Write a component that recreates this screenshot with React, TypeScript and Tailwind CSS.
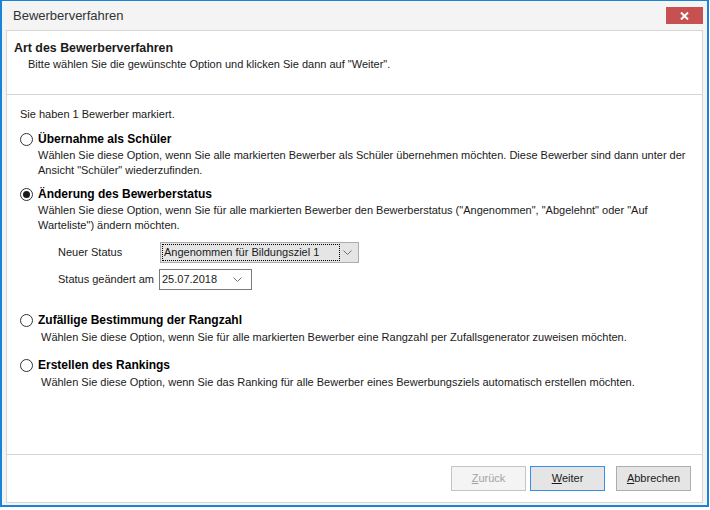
import type { ReactNode } from 'react'

const Radio = ({ checked }: { checked?: boolean }) => (
  <span className="w-[13px] h-[13px] shrink-0 rounded-full border border-[#333333] bg-white flex items-center justify-center">
    {checked && <span className="w-[7px] h-[7px] rounded-full bg-[#1a1a1a]" />}
  </span>
)

const Chevron = () => (
  <svg width="9" height="5" viewBox="0 0 9 5" className="shrink-0">
    <path d="M0.5 0.5 L4.5 4.5 L8.5 0.5" fill="none" stroke="#707070" strokeWidth="1" />
  </svg>
)

type OptionProps = {
  label: string
  checked?: boolean
  className?: string
  descClass?: string
  children: ReactNode
}

const Option = ({ label, checked, className, descClass, children }: OptionProps) => (
  <div className={className}>
    <div className="flex items-center h-[16px]">
      <Radio checked={checked} />
      <span className="ml-[5px] text-[12px] font-bold text-black">{label}</span>
    </div>
    <p className={`text-[11px] leading-[15px] text-[#1a1a1a] ${descClass ?? 'pl-[18px] mt-px'}`}>
      {children}
    </p>
  </div>
)

export default function App() {
  return (
    <div className="w-[710px] h-[510px] bg-white font-['Liberation_Sans',Arial,sans-serif]">
      <div className="w-[709px] h-[507px] border-2 border-t border-[#1883d7] bg-[#f4f4f4] flex flex-col px-1 pb-[2px]">
        {/* title bar */}
        <div className="h-[29px] shrink-0 flex items-center justify-between">
          <span className="pl-[7px] text-[13px] text-[#333333]">Bewerberverfahren</span>
          <button className="w-[37px] h-[17px] bg-[#c75050] flex items-center justify-center">
            <svg width="9" height="8" viewBox="0 0 9 8">
              <path d="M1 0.5 L8 7.5 M8 0.5 L1 7.5" stroke="white" strokeWidth="2" />
            </svg>
          </button>
        </div>

        {/* panel */}
        <div className="flex-1 border border-[#d5d5d5] bg-white flex flex-col">
          <div className="h-[64px] shrink-0 border-b border-[#d5d5d5] pt-[9px] pl-[7px]">
            <h1 className="text-[12.4px] leading-[16px] font-bold text-[#1a1a1a]">Art des Bewerberverfahren</h1>
            <p className="ml-[14px] text-[11px] leading-[16px] text-[#1a1a1a]">
              Bitte wählen Sie die gewünschte Option und klicken Sie dann auf "Weiter".
            </p>
          </div>

          <div className="flex-1 pl-[13px] pt-[12px]">
            <p className="text-[11px] leading-[15px] text-[#1a1a1a]">Sie haben 1 Bewerber markiert.</p>

            <Option label="Übernahme als Schüler" className="mt-[9px]">
              Wählen Sie diese Option, wenn Sie alle markierten Bewerber als Schüler übernehmen möchten. Diese Bewerber sind dann unter der
              <br />
              Ansicht "Schüler" wiederzufinden.
            </Option>

            <Option label="Änderung des Bewerberstatus" checked className="mt-[8px]">
              Wählen Sie diese Option, wenn Sie für alle markierten Bewerber den Bewerberstatus ("Angenommen", "Abgelehnt" oder "Auf
              <br />
              Warteliste") ändern möchten.
            </Option>

            <div className="pl-[38px] mt-[9px] flex flex-col gap-[6px] text-[11px] text-[#1a1a1a]">
              <div className="flex items-center">
                <span className="w-[102px]">Neuer Status</span>
                <div className="w-[199px] h-[21px] bg-[#e5e5e5] border border-[#acacac] flex items-center pl-px pr-[6px]">
                  <span className="w-[178px] h-[17px] border border-dotted border-black flex items-center pl-px">
                    Angenommen für Bildungsziel 1
                  </span>
                  <span className="flex-1 flex justify-end">
                    <Chevron />
                  </span>
                </div>
              </div>
              <div className="flex items-center">
                <span className="w-[101px]">Status geändert am</span>
                <div className="w-[93px] h-[21px] bg-white border border-[#7a7a7a] flex items-center pl-[2px] pr-[9px]">
                  <span className="flex-1">25.07.2018</span>
                  <Chevron />
                </div>
              </div>
            </div>

            <Option label="Zufällige Bestimmung der Rangzahl" className="mt-[22px]" descClass="pl-[21px] mt-[2px]">
              Wählen Sie diese Option, wenn Sie für alle markierten Bewerber eine Rangzahl per Zufallsgenerator zuweisen möchten.
            </Option>

            <Option label="Erstellen des Rankings" className="mt-[12px]" descClass="pl-[21px] mt-[2px]">
              Wählen Sie diese Option, wenn Sie das Ranking für alle Bewerber eines Bewerbungsziels automatisch erstellen möchten.
            </Option>
          </div>

          <div className="h-[48px] shrink-0 border-t border-[#d5d5d5] flex items-center justify-end pr-[11px] text-[11px]">
            <button
              disabled
              className="w-[75px] h-[25px] bg-[#f4f4f4] border border-[#c4c4c4] text-[#a3a3a3]"
            >
              <u>Z</u>urück
            </button>
            <button className="ml-[4px] w-[75px] h-[25px] bg-[#e5e5e5] border border-[#3b8fe3] text-[#1a1a1a]">
              <u>W</u>eiter
            </button>
            <button className="ml-[11px] w-[75px] h-[25px] bg-[#e5e5e5] border border-[#adadad] text-[#1a1a1a]">
              <u>A</u>bbrechen
            </button>
          </div>
        </div>
      </div>
    </div>
  )
}
